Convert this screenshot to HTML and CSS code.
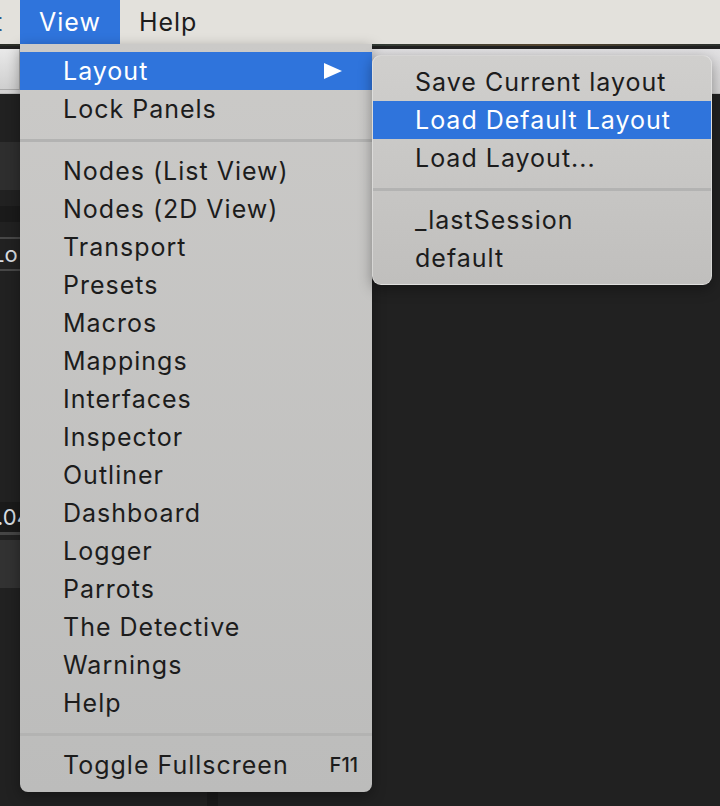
FILE: index.html
```html
<!DOCTYPE html>
<html lang="en">
<head>
    <meta charset="UTF-8">
    <title>View Menu</title>
    <link rel="stylesheet" href="styles.css">
</head>
<body>
    <div class="menubar">
        <span class="menubar-item cut">t</span>
        <span class="menubar-item active">View</span>
        <span class="menubar-item">Help</span>
    </div>
    <div class="desktop-strip"></div>
    <div class="titlebar">
        <div class="title-button"></div>
    </div>
    <div class="workspace">
        <div class="side">
            <div class="side-box"></div>
            <div class="side-band"></div>
            <div class="side-field">Lo</div>
            <div class="side-value">.04</div>
            <div class="side-box lower"></div>
        </div>
        <div class="bottom-col"></div>
    </div>

    <div class="menu main-menu">
        <div class="item selected">Layout <span class="arrow"></span></div>
        <div class="item">Lock Panels</div>
        <div class="separator"></div>
        <div class="item">Nodes (List View)</div>
        <div class="item">Nodes (2D View)</div>
        <div class="item">Transport</div>
        <div class="item">Presets</div>
        <div class="item">Macros</div>
        <div class="item">Mappings</div>
        <div class="item">Interfaces</div>
        <div class="item">Inspector</div>
        <div class="item">Outliner</div>
        <div class="item">Dashboard</div>
        <div class="item">Logger</div>
        <div class="item">Parrots</div>
        <div class="item">The Detective</div>
        <div class="item">Warnings</div>
        <div class="item">Help</div>
        <div class="separator"></div>
        <div class="item">Toggle Fullscreen <span class="shortcut">F11</span></div>
    </div>

    <div class="menu sub-menu">
        <div class="item">Save Current layout</div>
        <div class="item selected">Load Default Layout</div>
        <div class="item">Load Layout...</div>
        <div class="separator"></div>
        <div class="item">_lastSession</div>
        <div class="item">default</div>
    </div>
</body>
</html>
```

FILE: styles.css
```css
body {
    margin: 0;
    width: 720px;
    height: 806px;
    overflow: hidden;
    background-color: #212121;
    font-family: 'Inter', 'Liberation Sans', sans-serif;
    color: #1c1c1c;
    position: relative;
}

/* top system menu bar */
.menubar {
    height: 44px;
    background-color: #e3e1dc;
    display: flex;
    align-items: stretch;
    font-size: 25px;
    letter-spacing: 1px;
}

.menubar-item {
    display: flex;
    align-items: center;
    padding: 0 19px;
}

.menubar-item.cut {
    width: 20px;
    padding: 0;
    box-sizing: border-box;
    overflow: hidden;
    color: #2c5a8c;
    text-indent: -6px;
}

.menubar-item.active {
    background-color: #2f74dc;
    color: #fff;
}

.desktop-strip {
    height: 2px;
    background: linear-gradient(90deg, #2a2e28, #4a4032, #2f3a36, #54452f, #2a2f2c);
}

.titlebar {
    height: 44px;
    background: linear-gradient(#e2e1e3, #d4d3d3);
    border-bottom: 1px solid #bdbdbd;
}

.title-button {
    width: 19px;
    height: 40px;
    margin-top: 3px;
    background: linear-gradient(#e9e9e9, #cfcfcf);
    border-right: 1px solid #a9a9a9;
    border-bottom: 1px solid #a9a9a9;
}

.workspace {
    position: relative;
    height: 715px;
}

.side {
    width: 20px;
    display: flex;
    flex-direction: column;
}

.side-box {
    height: 48px;
    margin-top: 48px;
    background-color: #2e2e2e;
}

.side-band {
    height: 16px;
    margin-top: 16px;
    background-color: #1a1a1a;
}

.side-field {
    margin-top: 15px;
    height: 30px;
    border-top: 2px solid #474747;
    border-bottom: 2px solid #474747;
    color: #d8dde2;
    font-size: 22px;
    line-height: 30px;
    text-indent: -8px;
    overflow: hidden;
    white-space: nowrap;
}

.side-value {
    margin-top: 231px;
    height: 30px;
    background-color: #1a1a1a;
    border-bottom: 3px solid #454545;
    color: #d8dde2;
    font-size: 22px;
    line-height: 30px;
    text-indent: -3px;
    overflow: hidden;
    white-space: nowrap;
}

.side-box.lower {
    margin-top: 5px;
    height: 48px;
    background-color: #323232;
}

.bottom-col {
    position: absolute;
    left: 207px;
    bottom: 0;
    width: 11px;
    height: 20px;
    background-color: #1a1a1a;
}

/* dropdown menus */
.menu {
    position: absolute;
    padding: 8px 0;
    font-size: 25px;
    letter-spacing: 1px;
    box-shadow: 0 4px 14px rgba(0, 0, 0, 0.35);
}

.main-menu {
    left: 20px;
    top: 44px;
    width: 352px;
    background: linear-gradient(#cbcac8, #bcbcbb);
    border-radius: 0 0 8px 8px;
}

.sub-menu {
    left: 372px;
    top: 55px;
    width: 340px;
    background: linear-gradient(#d0cfcd, #c0bfbd);
    border-radius: 9px;
    border: 1px solid rgba(255, 255, 255, 0.35);
    box-sizing: border-box;
    padding: 7px 0;
}

.item {
    height: 38px;
    line-height: 38px;
    padding: 0 14px 0 43px;
    display: flex;
    align-items: center;
    white-space: nowrap;
}

.sub-menu .item {
    padding-left: 42px;
}

.item.selected {
    background-color: #2f74dc;
    color: #fff;
}

.arrow {
    margin-left: auto;
    margin-right: 16px;
    width: 0;
    height: 0;
    border-top: 8px solid transparent;
    border-bottom: 8px solid transparent;
    border-left: 18px solid #fff;
}

.shortcut {
    margin-left: auto;
    font-size: 20px;
    font-weight: 500;
    letter-spacing: 0;
}

.separator {
    height: 3px;
    margin: 11px 0 10px;
    background-color: #b3b3b2;
}
```
